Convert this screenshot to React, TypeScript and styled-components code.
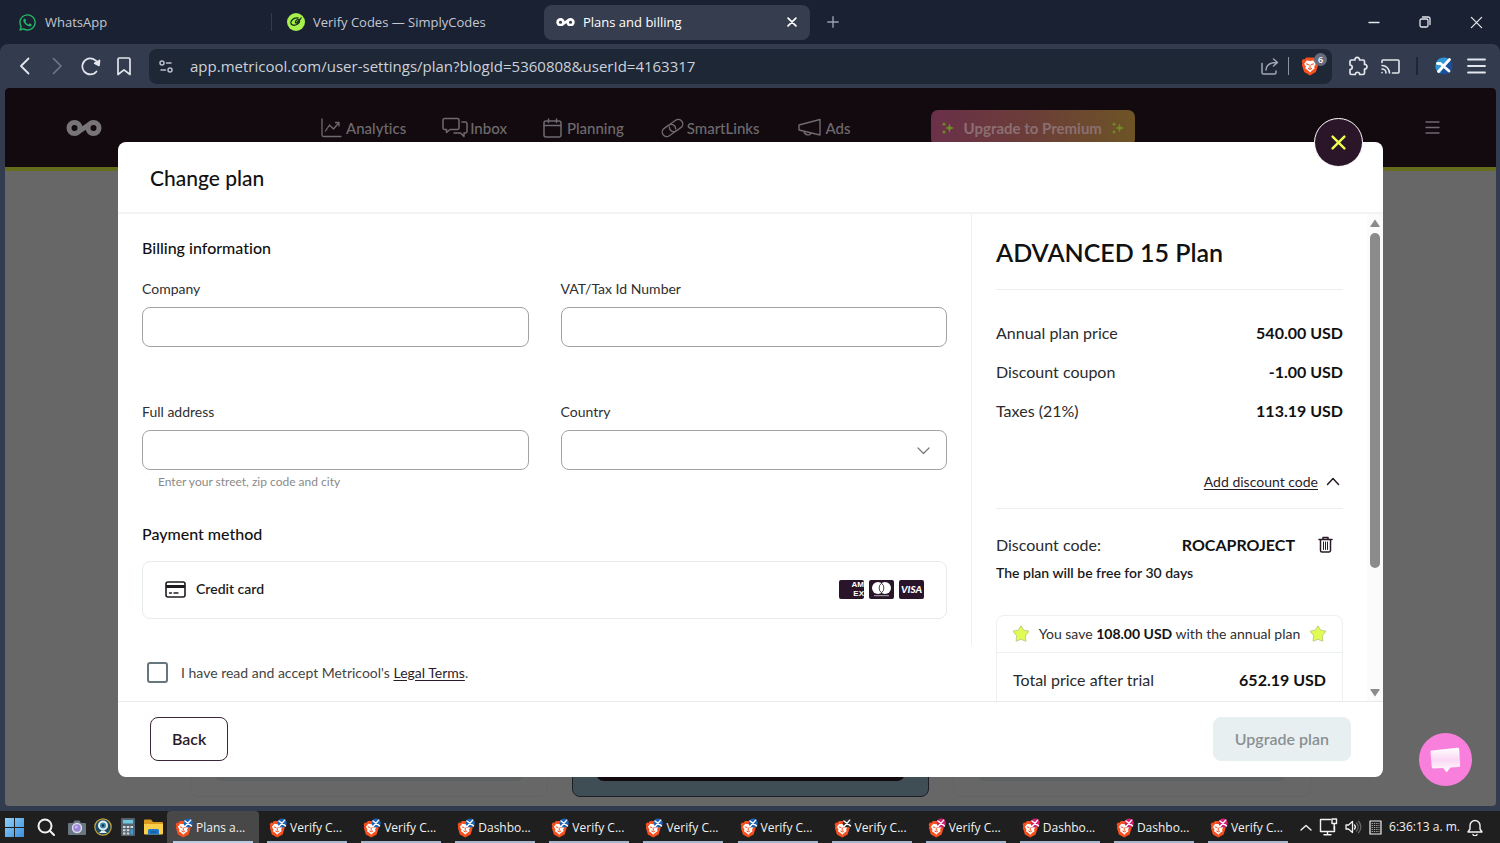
import React from 'react';
import styled, { createGlobalStyle } from 'styled-components';
import { FaWhatsapp } from 'react-icons/fa';

const uiFont = `"Open Sans", "Noto Sans", sans-serif`;
const appFont = `Lato, "Open Sans", sans-serif`;

const GlobalStyle = createGlobalStyle`
  *, *::before, *::after { box-sizing: border-box; }
  body { margin: 0; font-family: ${appFont}; font-variant-ligatures: none; color: #1b1020; }
  button, input, select { font: inherit; color: inherit; }
  button { border: 0; padding: 0; background: none; cursor: pointer; }
  svg { display: block; flex: none; }
  h1, h2, p { margin: 0; }
`;

/* ---------- Shell ---------- */

const Desktop = styled.div`
  display: flex;
  flex-direction: column;
  height: 100vh;
  overflow: hidden;
  background: #192132;
`;

const IconButton = styled.button<{ $w?: number; $color?: string }>`
  display: flex;
  align-items: center;
  justify-content: center;
  flex: none;
  width: ${(p) => p.$w ?? 33}px;
  height: 34px;
  color: ${(p) => p.$color ?? '#e3e6ec'};
`;

const Spacer = styled.div`
  flex: 1;
`;

/* ---------- Browser tabs ---------- */

const TabBar = styled.header`
  display: flex;
  align-items: center;
  gap: 3px;
  height: 44px;
  padding-left: 6px;
  font: 13px/18px ${uiFont};
  color: #c3c8d2;
`;

const Tab = styled.div<{ $active?: boolean; $divided?: boolean }>`
  display: flex;
  align-items: center;
  gap: 8px;
  flex: 0 1 266px;
  height: 35px;
  padding: 0 9px 0 12px;
  border-radius: 8px;
  white-space: nowrap;
  color: ${(p) => (p.$active ? '#ffffff' : 'inherit')};
  background: ${(p) => (p.$active ? '#353d4f' : 'transparent')};
  ${(p) =>
    p.$divided &&
    `&::after { content: ''; width: 1px; height: 18px; margin: 0 -9px 0 auto; background: #333c4f; }`}
`;

const TabClose = styled.button`
  display: flex;
  align-items: center;
  justify-content: center;
  width: 18px;
  height: 18px;
  margin-left: auto;
`;

/* ---------- Browser toolbar ---------- */

const ToolBar = styled.div`
  display: flex;
  align-items: center;
  height: 44px;
  padding: 0 7px 0 8px;
  border-radius: 8px 8px 0 0;
  background: #333b4e;
`;

const AddressBar = styled.form`
  display: flex;
  align-items: center;
  flex: 1;
  height: 35px;
  margin: 0 9px 0 9px;
  padding: 0 5px 0 10px;
  border-radius: 8px;
  background: #1e2735;
  color: #b9bfca;
`;

const AddressInput = styled.input`
  flex: 1;
  min-width: 0;
  margin-left: 17px;
  padding: 0;
  border: 0;
  outline: 0;
  background: none;
  font: 15px/22px ${uiFont};
  color: #ccd1da;
`;

const Separator = styled.span<{ $dark?: boolean }>`
  width: ${(p) => (p.$dark ? 2 : 1)}px;
  height: 18px;
  margin: 0 ${(p) => (p.$dark ? 9 : 8)}px;
  background: ${(p) => (p.$dark ? '#1f2736' : '#8c93a0')};
`;

const ShieldButton = styled.button`
  position: relative;
  display: flex;
  align-items: center;
  width: 26px;
  height: 26px;
  margin-left: 4px;
`;

const ShieldCount = styled.span`
  position: absolute;
  top: 0;
  right: 0;
  width: 13px;
  height: 13px;
  border-radius: 50%;
  background: #666b7b;
  font: 600 9px/13px ${uiFont};
  text-align: center;
  color: #fff;
`;

/* ---------- Page under the dialog ---------- */

const Frame = styled.div`
  display: flex;
  flex: 1;
  min-height: 0;
  padding: 0 4px 5px 5px;
  background: #333b4e;
`;

const Page = styled.div`
  position: relative;
  display: flex;
  flex-direction: column;
  flex: 1;
  min-width: 0;
  overflow: hidden;
  border-radius: 4px;
  background: #676767;
`;

const AppNav = styled.nav`
  display: flex;
  align-items: center;
  height: 83px;
  padding: 0 56px 0 61px;
  border-bottom: 4px solid #656d1d;
  background: #130a10;
  color: #6e6a6d;
`;

const NavLinks = styled.div`
  display: flex;
  align-items: center;
  gap: 36px;
  flex: 1;
  margin-left: 219px;
`;

const NavLink = styled.a<{ $gap: number }>`
  display: flex;
  align-items: center;
  gap: ${(p) => p.$gap}px;
  font-size: 15px;
  line-height: 20px;
  font-weight: 500;
  color: inherit;
  text-decoration: none;
`;

const PremiumButton = styled.button`
  display: flex;
  align-items: center;
  gap: 9px;
  height: 36px;
  margin-left: 44px;
  padding: 0 10px;
  border-radius: 7px;
  background: linear-gradient(90deg, #6a3049, #6b3e38 50%, #6d5425);
  font-size: 15px;
  line-height: 20px;
  font-weight: 700;
  color: #8b6f72;
  white-space: nowrap;
`;

const PlanCards = styled.div`
  display: grid;
  grid-template-columns: repeat(3, 1fr);
  gap: 24px;
  flex: 1;
  padding: 60px 185px 9px 185px;
`;

const PlanCard = styled.div<{ $featured?: boolean }>`
  display: flex;
  flex-direction: column;
  justify-content: flex-end;
  padding: 0 23px 15px;
  border: 1px solid ${(p) => (p.$featured ? '#1b1f26' : '#636363')};
  border-radius: 8px;
  background: ${(p) => (p.$featured ? '#3f4d54' : 'transparent')};

  &::after {
    content: '';
    height: 44px;
    border-radius: 8px;
    background: ${(p) => (p.$featured ? '#130a10' : '#5f6263')};
  }
`;

const ChatButton = styled.button`
  position: absolute;
  right: 24px;
  bottom: 20px;
  display: flex;
  align-items: center;
  justify-content: center;
  width: 53px;
  height: 53px;
  border-radius: 50%;
  background: #f97fdc;
`;

/* ---------- Dialog ---------- */

const Overlay = styled.div`
  position: absolute;
  inset: 0;
  display: flex;
  padding: 54px 113px 29px;
`;

const Dialog = styled.section`
  position: relative;
  display: flex;
  flex-direction: column;
  flex: 1;
  min-width: 0;
  border-radius: 8px;
  background: #fff;
`;

const CloseButton = styled.button`
  position: absolute;
  top: -24px;
  right: 20px;
  display: flex;
  align-items: center;
  justify-content: center;
  width: 49px;
  height: 49px;
  border: 1px solid #fff;
  border-radius: 50%;
  background: #2b1629;
  color: #ecff4f;
`;

const DialogHeader = styled.header`
  padding: 22px 32px 20px;
  border-bottom: 2px solid #f2f3f3;
`;

const DialogTitle = styled.h1`
  font-size: 21px;
  line-height: 28px;
  font-weight: 500;
  color: #111;
`;

const DialogBody = styled.div`
  display: flex;
  flex: 1;
  min-height: 0;
  overflow: hidden;
`;

const DialogFooter = styled.footer`
  display: flex;
  align-items: center;
  justify-content: space-between;
  height: 76px;
  padding: 0 32px 1px;
  border-top: 1px solid #e8eaea;
`;

const ActionButton = styled.button<{ $outlined?: boolean }>`
  height: 44px;
  padding: 0 21px;
  border: 1px solid ${(p) => (p.$outlined ? '#3a2637' : '#e7eff1')};
  border-radius: 8px;
  background: ${(p) => (p.$outlined ? '#fff' : '#e7eff1')};
  font-size: 16px;
  line-height: 24px;
  font-weight: 600;
  color: ${(p) => (p.$outlined ? '#2b1b29' : '#8b9093')};
`;

/* ---------- Billing form ---------- */

const FormColumn = styled.form`
  flex: 1;
  min-width: 0;
`;

const FormSection = styled.div`
  padding: 23px 24px 26px;
  border-right: 1px solid #edf0f1;
`;

const SectionTitle = styled.h2`
  font-size: 16px;
  line-height: 22px;
  font-weight: 500;
  color: #111;
`;

const FieldGrid = styled.div`
  display: grid;
  grid-template-columns: 1fr 1fr;
  gap: 32px;
  margin: 20px 0 30px;
`;

const Field = styled.div`
  position: relative;
  display: flex;
  flex-direction: column;
  min-height: 91px;
`;

const FieldLabel = styled.label`
  margin-bottom: 8px;
  font-size: 14px;
  line-height: 20px;
  color: #2f2f31;
`;

const controlStyle = `
  width: 100%;
  height: 40px;
  padding: 0 12px;
  border: 1px solid #a3a3a3;
  border-radius: 8px;
  outline: 0;
  background: #fff;
  font-size: 14px;
`;

const TextInput = styled.input`
  ${controlStyle}
`;

const SelectBox = styled.div`
  position: relative;
`;

const Select = styled.select`
  ${controlStyle}
  appearance: none;
`;

const SelectArrow = styled.span`
  position: absolute;
  top: 17px;
  right: 17px;
  color: #777;
  pointer-events: none;
`;

const Hint = styled.p`
  padding: 2px 16px 0;
  font-size: 12px;
  line-height: 20px;
  color: #8a8a8a;
`;

const PaymentOption = styled.button`
  display: flex;
  align-items: center;
  gap: 10px;
  width: 100%;
  height: 58px;
  margin-top: 16px;
  padding: 0 22px 2px;
  border: 1px solid #e6ecee;
  border-radius: 8px;
  font-size: 14px;
  line-height: 20px;
  font-weight: 600;
  color: #1f1a20;
`;

const CardBrands = styled.span`
  display: flex;
  gap: 5px;
  margin-left: auto;
`;

const CardBrand = styled.span`
  display: flex;
  flex-direction: column;
  align-items: center;
  justify-content: center;
  width: 25px;
  height: 19px;
  border-radius: 2px;
  background: #29142a;
  color: #fff;
`;

const VisaText = styled.span`
  font: italic 900 10px/10px ${appFont};
`;

const AmexLine = styled.span`
  align-self: flex-end;
  height: 9px;
  font: 900 8px/9px "Liberation Sans", sans-serif;
`;

const Terms = styled.div`
  display: flex;
  align-items: center;
  gap: 13px;
  padding: 17px 29px;
  font-size: 14px;
  line-height: 20px;
  color: #444;
`;

const Checkbox = styled.input`
  appearance: none;
  flex: none;
  width: 21px;
  height: 21px;
  margin: 0;
  border: 2px solid #66767d;
  border-radius: 3px;
`;

const TermsLink = styled.a`
  color: #2b1b29;
  text-underline-offset: 2px;
`;

/* ---------- Plan summary ---------- */

const Summary = styled.aside`
  flex: 0 0 395px;
  padding: 22px 24px 0;
`;

const PlanTitle = styled.h2`
  padding-bottom: 21px;
  border-bottom: 1px solid #ebeeef;
  font-size: 25px;
  line-height: 32px;
  font-weight: 600;
  color: #111;
`;

const PriceList = styled.div`
  padding: 23px 0 40px;
`;

const SummaryRow = styled.div<{ $h: number; $inset?: boolean }>`
  display: flex;
  align-items: center;
  justify-content: space-between;
  height: ${(p) => p.$h}px;
  padding: ${(p) => (p.$inset ? '0 16px' : '0')};
  font-size: 16px;
  line-height: 24px;
  color: #2a2a2c;
`;

const Amount = styled.strong`
  font-weight: 700;
  color: #111;
`;

const DiscountToggle = styled.button`
  display: flex;
  align-items: center;
  gap: 8px;
  width: 100%;
  height: 39px;
  justify-content: flex-end;
  padding: 0 3px 15px;
  border-bottom: 1px solid #ebeeef;
  font-size: 14px;
  line-height: 20px;
  color: #2b1b29;
`;

const Underlined = styled.span`
  text-decoration: underline;
  text-underline-offset: 2px;
`;

const CodeBlock = styled.div`
  padding: 20px 0 32px;
`;

const CodeValue = styled.span`
  display: flex;
  align-items: center;
  gap: 12px;
`;

const FreeNote = styled.p`
  margin-top: 3px;
  font-size: 14px;
  line-height: 20px;
  font-weight: 600;
  color: #1a1a1c;
`;

const TotalBox = styled.div`
  border: 1px solid #edf0f1;
  border-radius: 8px 8px 0 0;
`;

const SavingLine = styled.div`
  display: flex;
  align-items: center;
  justify-content: space-between;
  height: 37px;
  padding: 0 15px;
  border-bottom: 1px solid #edf0f1;
  font-size: 14px;
  line-height: 20px;
  color: #2f2f31;
`;

/* ---------- Scroll bar ---------- */

const ScrollTrack = styled.div`
  display: flex;
  flex-direction: column;
  align-items: center;
  flex: 0 0 16px;
  padding: 5px 0 4px;
  background: #fbfbfb;
  color: #8b8b8b;
`;

const ScrollThumb = styled.div`
  flex: 0 1 70%;
  width: 10px;
  margin: 6px 0 auto;
  border-radius: 5px;
  background: #8b8b8b;
`;

/* ---------- Task bar ---------- */

const TaskBar = styled.footer`
  display: flex;
  align-items: center;
  height: 32px;
  background: #1f1f1f;
  font: 12px/16px ${uiFont};
  color: #f2f2f2;
`;

const Pinned = styled.div`
  display: flex;
  align-items: center;
  justify-content: space-between;
  width: 158px;
  margin: 0 8px 0 5px;
  flex: none;
`;

const PlainButton = styled.button<{ $w?: number }>`
  display: flex;
  align-items: center;
  justify-content: center;
  min-width: ${(p) => p.$w ?? 0}px;
`;

const TaskList = styled.div`
  display: grid;
  grid-template-columns: repeat(12, 1fr);
  flex: 1;
  min-width: 0;
  height: 32px;
  margin-left: -4px;
`;

const TaskButton = styled.button<{ $active?: boolean }>`
  display: flex;
  align-items: center;
  gap: 2px;
  width: 92px;
  height: 32px;
  padding: 1px 0 0 8px;
  border-radius: 4px 4px 0 0;
  background: ${(p) =>
    p.$active
      ? 'linear-gradient(#b9cbe2, #b9cbe2) center bottom / 80px 2px no-repeat, #484848'
      : 'linear-gradient(#a5b6cc, #a5b6cc) center bottom / 80px 2px no-repeat'};
  white-space: nowrap;
`;

const Tray = styled.div`
  display: flex;
  align-items: center;
  gap: 7px;
  flex: none;
  margin-left: 4px;
  padding-right: 17px;
`;

const Clock = styled.time`
  white-space: nowrap;
`;

/* ---------- Drawings ---------- */

const Line = ({ w, h = w, box, sw = 2, children }: { w: number; h?: number; box: string; sw?: number; children: React.ReactNode }) => (
  <svg width={w} height={h} viewBox={box} fill="none" stroke="currentColor" strokeWidth={sw} strokeLinecap="round" strokeLinejoin="round" aria-hidden>
    {children}
  </svg>
);

const Infinity = ({ w, color }: { w: number; color: string }) => (
  <svg width={w} height={(w * 16) / 36} viewBox="0 0 36 16" fill="none" stroke={color} strokeWidth="5" aria-hidden>
    <circle cx="8.500" cy="8" r="5.500" />
    <circle cx="27.500" cy="8" r="5.500" />
    <path d="M12.500 11.500 C16 10 20 6 23.500 4.500" />
  </svg>
);

const SimplyCodesIcon = () => (
  <svg width="18" height="18" viewBox="0 0 18 18" fill="none" aria-hidden>
    <circle cx="9" cy="9" r="9" fill="#a8f04c" />
    <path d="M11 5C7.500 4.500 3.800 7 3.800 9.800c0 2.600 3.800 3 6 1.700 2-1.100 3-2.800 2.700-4.100-.5-1.200-2.700-.8-3.700.6-.8 1.300-.3 2.100.6 1.900 1.300-.3 2.600-2.600 4.800-5" stroke="#15301a" strokeWidth="1.300" strokeLinecap="round" strokeLinejoin="round" />
  </svg>
);

const LionShape = () => (
  <>
    <path d="M6 1.500h8l1.800 2 1.900-.2 1.500 2.600-.8 1.900.6 2-2.500 8L10 21.500 3.500 17.800 1 9.800l.6-2-.8-1.900 1.500-2.600 1.900.2z" fill="#f5501e" />
    <path d="M6.500 4.800l3.500.6 3.500-.6 3 3.600-1.900 3.300.6 2.200-3.100 2.200L10 18.200 7.900 16.100 4.800 13.900l.6-2.200-1.900-3.300z" fill="#fff" />
    <path d="M5.800 8.600l3 .9M14.200 8.600l-3 .9M10 9.500v3.800M7.800 13.500l2.200 1.200 2.200-1.200" stroke="#f5501e" strokeWidth="1.200" fill="none" />
  </>
);

const Lion = () => (
  <svg width="18" height="20" viewBox="0 0 20 22" aria-hidden>
    <LionShape />
  </svg>
);

const TaskLion = ({ badge }: { badge: string }) => (
  <svg width="19" height="20" viewBox="0 0 23 24" aria-hidden>
    <g transform="translate(0 2)">
      <LionShape />
    </g>
    <circle cx="16" cy="6" r="5.500" fill={badge} />
    <path d="M12 3.500l8 6M19 2.500l-7 8" stroke="#fff" strokeWidth="1.700" strokeLinecap="round" />
  </svg>
);

const Sparkles = () => (
  <svg width="14" height="14" viewBox="0 0 14 14" fill="#6f8a26" aria-hidden>
    <path d="M8.500 2.500l1.200 3.200L13.500 7 9.700 8.300 8.500 11.500 7.300 8.300 4 7l3.300-1.300zM3 .8l.7 1.700 1.700.7-1.700.7L3 5.600l-.7-1.700-1.700-.7 1.700-.7zM3 8.600l.7 1.700 1.700.7-1.700.7L3 13.400l-.7-1.700-1.700-.7 1.700-.7z" />
  </svg>
);

const Star = () => (
  <svg width="18" height="18" viewBox="0 0 18 18" aria-hidden>
    <path d="M9 1.800l2.200 4.100 4.700.9-3.300 3.600.6 4.800L9 13.300l-4.200 1.900.6-4.800-3.300-3.600 4.700-.9z" fill="#e2fb53" stroke="#e2fb53" strokeWidth="2" strokeLinejoin="round" />
    <path d="M9 .9l2.600 4.200 5.200 1-3.400 4.500.5 5.700L9 14.300l-4.900 2 .5-5.700-3.400-4.500 5.200-1z" fill="none" stroke="#b9c592" strokeWidth="0.800" strokeLinejoin="round" />
  </svg>
);

const MastercardIcon = () => (
  <svg width="21" height="16" viewBox="0 0 21 16" aria-hidden>
    <circle cx="7" cy="7" r="6" fill="#fff" />
    <circle cx="14" cy="7" r="6" fill="#fff" />
    <path d="M10.500 2.200a6 6 0 0 1 0 9.600 6 6 0 0 1 0-9.600z" fill="#fff" stroke="#29142a" strokeWidth="0.800" />
    <path d="M3 14.700h15" stroke="#b5aab5" strokeWidth="1" />
  </svg>
);

const WindowsIcon = () => (
  <svg width="19" height="19" viewBox="0 0 19 19" aria-hidden>
    <defs>
      <linearGradient id="win" x1="0" y1="0" x2="1" y2="1">
        <stop offset="0" stopColor="#8fd0f5" />
        <stop offset="1" stopColor="#3d8fdf" />
      </linearGradient>
    </defs>
    <path d="M0 0h9v9H0zM10 0h9v9h-9zM0 10h9v9H0zM10 10h9v9h-9z" fill="url(#win)" />
  </svg>
);

const CameraIcon = () => (
  <svg width="18" height="15" viewBox="0 0 18 15" aria-hidden>
    <path d="M1 3h4l1.500-2.500h5L13 3h4a1 1 0 0 1 1 1v10a1 1 0 0 1-1 1H1a1 1 0 0 1-1-1V4a1 1 0 0 1 1-1z" fill="#6a7683" />
    <circle cx="9" cy="8" r="5.200" fill="#d9dde3" />
    <circle cx="9" cy="8" r="3.700" fill="#9b84d8" />
    <circle cx="8.300" cy="7" r="1.500" fill="#c7b8f0" />
  </svg>
);

const WebcamIcon = () => (
  <svg width="18" height="18" viewBox="0 0 18 18" aria-hidden>
    <circle cx="9" cy="9" r="8.200" fill="#1d4a63" stroke="#c2a23c" strokeWidth="1.200" />
    <circle cx="9" cy="7.500" r="5" fill="#e4eef2" />
    <circle cx="9" cy="7.500" r="3" fill="#3c87a8" />
    <circle cx="9" cy="7.500" r="1.200" fill="#12303f" />
    <path d="M5 15l2.500-2.500h3L13 15z" fill="#e4eef2" />
  </svg>
);

const CalculatorIcon = () => (
  <svg width="14" height="18" viewBox="0 0 14 18" aria-hidden>
    <rect width="14" height="18" rx="1" fill="#56626d" />
    <rect x="2" y="2" width="10" height="3.500" fill="#6fc7e0" />
    <path d="M2 8h2.500v2H2zM5.800 8h2.500v2H5.800zM2 11.300h2.500v2H2zM5.800 11.300h2.500v2H5.800zM2 14.500h2.500v2H2zM5.800 14.500h2.500v2H5.800zM9.500 8H12v2H9.500z" fill="#d4dbe0" />
    <path d="M9.500 11.300H12v5.200H9.500z" fill="#3d9bd8" />
  </svg>
);

const FolderIcon = () => (
  <svg width="19" height="16" viewBox="0 0 19 16" aria-hidden>
    <path d="M0 1.500A1 1 0 0 1 1 .5h6l2 2.500h9a1 1 0 0 1 1 1V15H0z" fill="#d99a1e" />
    <path d="M0 5h19v9.500a1 1 0 0 1-1 1H1a1 1 0 0 1-1-1z" fill="#fccf4a" />
    <path d="M4 15.500v-4a1.500 1.500 0 0 1 1.500-1.500h8a1.500 1.500 0 0 1 1.500 1.500v4z" fill="#1f78c8" />
    <path d="M6.500 13h6" stroke="#0e4f8e" strokeWidth="1" />
  </svg>
);

const ProfileIcon = () => (
  <svg width="18" height="18" viewBox="0 0 18 18" aria-hidden>
    <circle cx="9" cy="9" r="8.500" fill="#1b4f9c" />
    <path d="M9 .5a8.500 8.500 0 0 0-4 16L14 2A8.500 8.500 0 0 0 9 .5z" fill="#2f97d6" />
    <path d="M2.500 6.500h3L14 14M14.500 2.500L3.500 14.500" stroke="#fff" strokeWidth="2.800" strokeLinecap="round" strokeLinejoin="round" fill="none" />
  </svg>
);

const ChatIcon = () => (
  <svg width="31" height="26" viewBox="0 0 31 26" aria-hidden>
    <defs>
      <linearGradient id="chat" x1="0" y1="0" x2="0" y2="1">
        <stop offset="0" stopColor="#fff" />
        <stop offset="0.500" stopColor="#fbd7f3" />
        <stop offset="1" stopColor="#fff" />
      </linearGradient>
    </defs>
    <path d="M1.500 3.500L27.500.8a1.500 1.500 0 0 1 1.700 1.400l1 16.200a1.500 1.500 0 0 1-1.400 1.500l-8.300.6-3.800 4.700-3.700-4.300-9.800.6a1.500 1.500 0 0 1-1.500-1.400L.5 5a1.400 1.400 0 0 1 1-1.500z" fill="url(#chat)" />
  </svg>
);

/* ---------- Data ---------- */

const navItems = [
  {
    label: 'Analytics',
    gap: 4,
    icon: (
      <Line w={21} h={20} box="0 0 21 20" sw={1.3}>
        <path d="M1 1v16a1.500 1.500 0 0 0 1.500 1.500H20M4.500 13l4-6 4 4 5.500-6.500M14.500 4.500H18V8" />
      </Line>
    ),
  },
  {
    label: 'Inbox',
    gap: 2,
    icon: (
      <Line w={26} h={21} box="0 0 26 21" sw={1.5}>
        <path d="M2.500 1.500h13A1.500 1.500 0 0 1 17 3v8a1.500 1.500 0 0 1-1.500 1.500H8l-3.500 3v-3h-2A1.500 1.500 0 0 1 1 11V3a1.500 1.500 0 0 1 1.500-1.500z" />
        <path d="M20 5h3.500A1.500 1.500 0 0 1 25 6.500v8a1.500 1.500 0 0 1-1.500 1.500H22v3.500L18.500 16H12" />
      </Line>
    ),
  },
  {
    label: 'Planning',
    gap: 5,
    icon: (
      <Line w={19} h={20} box="0 0 19 20" sw={1.5}>
        <rect x="1" y="3" width="17" height="16" rx="2" />
        <path d="M1 7.500h17M5.500 1v3.500M13.500 1v3.500" />
      </Line>
    ),
  },
  {
    label: 'SmartLinks',
    gap: 2,
    icon: (
      <Line w={25} h={20} box="0 0 25 20" sw={1.4}>
        <g transform="rotate(-35 12.5 10)">
          <path d="M12 14.500H5.500a4.500 4.500 0 0 1 0-9H11a4.500 4.500 0 0 1 3.500 7.200" />
          <path d="M13 5.500h6.500a4.500 4.500 0 0 1 0 9H14a4.500 4.500 0 0 1-3.500-7.200" />
        </g>
      </Line>
    ),
  },
  {
    label: 'Ads',
    gap: 5,
    icon: (
      <Line w={25} h={19} box="-2 0 25 19" sw={1.4}>
        <path d="M1 7l21-5.500v15.500L1 12zM6 13.300c0 4 6.500 4.700 7 1.700" />
      </Line>
    ),
  },
];

const prices = [
  ['Annual plan price', '540.00 USD'],
  ['Discount coupon', '-1.00 USD'],
  ['Taxes (21%)', '113.19 USD'],
];

const blue = '#1d63b5';
const pink = '#d0206f';
const tasks: [string, string][] = [
  ['Plans a...', blue],
  ['Verify C...', blue],
  ['Verify C...', blue],
  ['Dashbo...', blue],
  ['Verify C...', blue],
  ['Verify C...', blue],
  ['Verify C...', blue],
  ['Verify C...', '#2b2b2f'],
  ['Verify C...', pink],
  ['Dashbo...', pink],
  ['Dashbo...', pink],
  ['Verify C...', pink],
];

const Cross = ({ size, sw }: { size: number; sw: number }) => (
  <Line w={size} box="0 0 14 14" sw={sw}>
    <path d="M1.500 1.500l11 11M12.500 1.500l-11 11" />
  </Line>
);

/* ---------- Sections ---------- */

const BrowserTop = () => (
  <>
    <TabBar>
      <Tab $divided>
        <FaWhatsapp size={19} color="#25b668" />
        WhatsApp
      </Tab>
      <Tab>
        <SimplyCodesIcon />
        Verify Codes — SimplyCodes
      </Tab>
      <Tab $active>
        <Infinity w={19} color="#fff" />
        Plans and billing
        <TabClose aria-label="Close tab">
          <Cross size={10} sw={2.4} />
        </TabClose>
      </Tab>
      <IconButton aria-label="New tab" $w={40} $color="#99a0ad">
        <Line w={12} box="0 0 12 12" sw={1.4}>
          <path d="M6 .8v10.400M.8 6h10.400" />
        </Line>
      </IconButton>
      <Spacer />
      <IconButton aria-label="Minimize" $w={48}>
        <Line w={12} box="0 0 12 12" sw={1.4}>
          <path d="M1 6.500h10" />
        </Line>
      </IconButton>
      <IconButton aria-label="Restore" $w={48}>
        <Line w={12} box="0 0 12 12" sw={1.3}>
          <rect x="1" y="3" width="8" height="8" rx="1.500" />
          <path d="M3.500 1H9a2 2 0 0 1 2 2v5.500" />
        </Line>
      </IconButton>
      <IconButton aria-label="Close" $w={48}>
        <Cross size={13} sw={1.4} />
      </IconButton>
    </TabBar>
    <ToolBar>
      <IconButton aria-label="Back">
        <Line w={11} h={18} box="0 0 11 18" sw={1.8}>
          <path d="M9.500 1.500L2 9l7.500 7.500" />
        </Line>
      </IconButton>
      <IconButton aria-label="Forward" $color="#717888">
        <Line w={11} h={18} box="0 0 11 18" sw={1.6}>
          <path d="M1.500 1.500L9 9l-7.500 7.500" />
        </Line>
      </IconButton>
      <IconButton aria-label="Reload">
        <Line w={20} h={19} box="0 0 20 19" sw={1.7}>
          <path d="M15.500 14.500A8 8 0 1 1 16.800 6.500" />
          <path d="M18.500 3.500l-.5 5-4.300-2.200z" fill="currentColor" />
        </Line>
      </IconButton>
      <IconButton aria-label="Bookmark">
        <Line w={14} h={19} box="0 0 14 19" sw={1.7}>
          <path d="M1 17.500V2.500A1.500 1.500 0 0 1 2.500 1h9A1.500 1.500 0 0 1 13 2.500v15l-6-4.700z" />
        </Line>
      </IconButton>
      <AddressBar>
        <Line w={14} h={13} box="0 0 14 13" sw={1.5}>
          <circle cx="3" cy="3" r="2" />
          <path d="M7.500 3H12" />
          <circle cx="11" cy="10" r="2" />
          <path d="M2 10h4.500" />
        </Line>
        <AddressInput aria-label="Address" defaultValue="app.metricool.com/user-settings/plan?blogId=5360808&userId=4163317" />
        <IconButton type="button" aria-label="Share" $w={20} $color="#a1a7b2">
          <Line w={18} h={17} box="0 0 18 17" sw={1.5}>
            <path d="M1 5.500v9A1.500 1.500 0 0 0 2.500 16h11a1.500 1.500 0 0 0 1.500-1.500V13M5 12c.3-5 3.500-7.500 11-7.500M12.500 1L16.500 4.500 12.500 8" />
          </Line>
        </IconButton>
        <Separator />
        <ShieldButton type="button" aria-label="Shields">
          <Lion />
          <ShieldCount>6</ShieldCount>
        </ShieldButton>
      </AddressBar>
      <IconButton aria-label="Extensions">
        <Line w={20} box="0 0 20 20" sw={1.7}>
          <path d="M2 5.500A1.500 1.500 0 0 1 3.500 4H7c-.7-3.500 5-3.500 4.500 0h3.500A1.500 1.500 0 0 1 16.500 5.500V8.500c3.300-.6 3.300 5 0 4.500v4a1.500 1.500 0 0 1-1.500 1.500h-3.300c.2-3-4.600-3-4.400 0H3.500A1.500 1.500 0 0 1 2 17v-3.500c3-.2 3-4.300 0-4.500z" />
        </Line>
      </IconButton>
      <IconButton aria-label="Cast">
        <Line w={19} h={15} box="0 0 19 15" sw={1.6}>
          <path d="M1 3.500V2a1 1 0 0 1 1-1h15a1 1 0 0 1 1 1v11a1 1 0 0 1-1 1h-5.500M1 6.500A7.500 7.500 0 0 1 8.500 14M1 10a4 4 0 0 1 4 4M1 13.500v.3" />
        </Line>
      </IconButton>
      <Separator $dark />
      <IconButton aria-label="Profile">
        <ProfileIcon />
      </IconButton>
      <IconButton aria-label="Menu">
        <Line w={19} h={16} box="0 0 19 16" sw={1.8}>
          <path d="M1 1.500h17M1 8h17M1 14.500h17" />
        </Line>
      </IconButton>
    </ToolBar>
  </>
);

const BillingForm = () => (
  <FormColumn id="billing">
    <FormSection>
      <SectionTitle>Billing information</SectionTitle>
      <FieldGrid>
        <Field>
          <FieldLabel htmlFor="company">Company</FieldLabel>
          <TextInput id="company" />
        </Field>
        <Field>
          <FieldLabel htmlFor="vat">VAT/Tax Id Number</FieldLabel>
          <TextInput id="vat" />
        </Field>
        <Field>
          <FieldLabel htmlFor="address">Full address</FieldLabel>
          <TextInput id="address" aria-describedby="address-hint" />
          <Hint id="address-hint">Enter your street, zip code and city</Hint>
        </Field>
        <Field>
          <FieldLabel htmlFor="country">Country</FieldLabel>
          <SelectBox>
            <Select id="country" defaultValue="">
              <option value="" />
            </Select>
            <SelectArrow>
              <Line w={13} h={8} box="0 0 13 8" sw={1.2}>
                <path d="M1 1l5.500 5.500L12 1" />
              </Line>
            </SelectArrow>
          </SelectBox>
        </Field>
      </FieldGrid>
      <SectionTitle>Payment method</SectionTitle>
      <PaymentOption type="button">
        <Line w={21} h={17} box="0 0 21 17" sw={1.6}>
          <rect x="1" y="1" width="19" height="15" rx="2" />
          <path d="M1 5.500h19" strokeWidth="3" strokeLinecap="butt" />
          <path d="M4.500 12h2M9 12h4" strokeWidth="1.300" />
        </Line>
        Credit card
        <CardBrands>
          <CardBrand>
            <AmexLine>AM</AmexLine>
            <AmexLine>EX</AmexLine>
          </CardBrand>
          <CardBrand>
            <MastercardIcon />
          </CardBrand>
          <CardBrand>
            <VisaText>VISA</VisaText>
          </CardBrand>
        </CardBrands>
      </PaymentOption>
    </FormSection>
    <Terms>
      <Checkbox type="checkbox" id="terms" />
      <label htmlFor="terms">
        I have read and accept Metricool's <TermsLink href="#terms">Legal Terms</TermsLink>.
      </label>
    </Terms>
  </FormColumn>
);

const PlanSummary = () => (
  <Summary>
    <PlanTitle>ADVANCED 15 Plan</PlanTitle>
    <PriceList>
      {prices.map(([label, amount]) => (
        <SummaryRow key={label} $h={39}>
          {label}
          <Amount>{amount}</Amount>
        </SummaryRow>
      ))}
    </PriceList>
    <DiscountToggle>
      <Underlined>Add discount code</Underlined>
      <Line w={14} h={9} box="0 0 14 9" sw={1.5}>
        <path d="M1.500 7.500L7 1.500l5.500 6" />
      </Line>
    </DiscountToggle>
    <CodeBlock>
      <SummaryRow $h={31}>
        Discount code:
        <CodeValue>
          <Amount>ROCAPROJECT</Amount>
          <IconButton aria-label="Remove code" $w={36} $color="#2b1b29">
            <Line w={15} h={17} box="0 0 15 17" sw={1.5}>
              <path d="M1 3.500h13M5 3.500V1.500h5v2M2.500 3.500v11A1.500 1.500 0 0 0 4 16h7a1.500 1.500 0 0 0 1.500-1.500v-11" />
              <path d="M5.500 6v7.500M7.500 6v7.500M9.500 6v7.500" strokeWidth="1" />
            </Line>
          </IconButton>
        </CodeValue>
      </SummaryRow>
      <FreeNote>The plan will be free for 30 days</FreeNote>
    </CodeBlock>
    <TotalBox>
      <SavingLine>
        <Star />
        <span>
          You save <Amount>108.00 USD</Amount> with the annual plan
        </span>
        <Star />
      </SavingLine>
      <SummaryRow $h={54} $inset>
        Total price after trial
        <Amount>652.19 USD</Amount>
      </SummaryRow>
    </TotalBox>
  </Summary>
);

export default function App() {
  return (
    <Desktop>
      <GlobalStyle />
      <BrowserTop />
      <Frame>
        <Page>
          <AppNav>
            <Infinity w={36} color="#787577" />
            <NavLinks>
              {navItems.map((item) => (
                <NavLink key={item.label} href="#" $gap={item.gap}>
                  {item.icon}
                  {item.label}
                </NavLink>
              ))}
              <PremiumButton>
                <Sparkles />
                Upgrade to Premium
                <Sparkles />
              </PremiumButton>
            </NavLinks>
            <Line w={15} h={13} box="0 0 15 13" sw={1.4}>
              <path d="M1 1h13M1 6.500h13M1 12h13" />
            </Line>
          </AppNav>
          <PlanCards>
            <PlanCard />
            <PlanCard $featured />
            <PlanCard />
          </PlanCards>
          <Overlay>
            <Dialog role="dialog" aria-labelledby="dialog-title">
              <DialogHeader>
                <DialogTitle id="dialog-title">Change plan</DialogTitle>
              </DialogHeader>
              <DialogBody>
                <BillingForm />
                <PlanSummary />
                <ScrollTrack aria-hidden>
                  <svg width="10" height="8" viewBox="0 0 10 8" fill="currentColor">
                    <path d="M5 0.500L9.500 7a.6.6 0 0 1-.5 1H1a.6.6 0 0 1-.5-1z" />
                  </svg>
                  <ScrollThumb />
                  <svg width="10" height="8" viewBox="0 0 10 8" fill="currentColor">
                    <path d="M5 7.500L.5 1A.6.6 0 0 1 1 0h8a.6.6 0 0 1 .5 1z" />
                  </svg>
                </ScrollTrack>
              </DialogBody>
              <DialogFooter>
                <ActionButton $outlined>Back</ActionButton>
                <ActionButton disabled>Upgrade plan</ActionButton>
              </DialogFooter>
              <CloseButton aria-label="Close dialog">
                <Cross size={15} sw={2.2} />
              </CloseButton>
            </Dialog>
          </Overlay>
          <ChatButton aria-label="Open chat">
            <ChatIcon />
          </ChatButton>
        </Page>
      </Frame>
      <TaskBar>
        <Pinned>
          <PlainButton aria-label="Start"><WindowsIcon /></PlainButton>
          <PlainButton aria-label="Search" $w={26}>
            <Line w={18} box="0 0 18 18" sw={2}>
              <circle cx="8" cy="8" r="6.500" />
              <path d="M12.800 12.800L17 17" />
            </Line>
          </PlainButton>
          <PlainButton aria-label="Camera"><CameraIcon /></PlainButton>
          <PlainButton aria-label="Webcam"><WebcamIcon /></PlainButton>
          <PlainButton aria-label="Calculator"><CalculatorIcon /></PlainButton>
          <PlainButton aria-label="Files"><FolderIcon /></PlainButton>
        </Pinned>
        <TaskList>
          {tasks.map(([label, badge], i) => (
            <TaskButton key={i} $active={i === 0}>
              <TaskLion badge={badge} />
              {label}
            </TaskButton>
          ))}
        </TaskList>
        <Tray>
          <PlainButton aria-label="Show hidden icons">
            <Line w={12} h={7} box="0 0 12 7" sw={1.4}>
              <path d="M1 6l5-4.500L11 6" />
            </Line>
          </PlainButton>
          <Line w={19} h={18} box="0 0 19 18" sw={1.4}>
            <path d="M11.500 1.500h-10v12h14v-5M5 16.800h7M8.500 13.500v3" />
            <rect x="13" y="1" width="4.500" height="4.500" />
            <path d="M15.200 5.500v6" />
          </Line>
          <Line w={17} h={14} box="0 0 17 14" sw={1.3}>
            <path d="M1 5h2.500L7.500 1.500v11L3.500 9H1zM9.500 5a3 3 0 0 1 0 4" />
            <path d="M11.500 3a6 6 0 0 1 0 8M13.500 1.200a8.500 8.500 0 0 1 0 11.600" stroke="#666" />
          </Line>
          <Line w={13} h={15} box="0 0 13 15" sw={1.2}>
            <rect x="1" y="1" width="11" height="13" />
            <path d="M3 3.500h7M3 5.500h7M3 7.500h7M3 9.500h7M3 11.500h7" stroke="#aaa" strokeWidth="1" strokeDasharray="0.500 1.800" />
          </Line>
          <Clock>6:36:13 a. m.</Clock>
          <PlainButton aria-label="Notifications">
            <Line w={16} h={17} box="0 0 16 17" sw={1.4}>
              <path d="M1 13h14l-2-3V6.500a5 5 0 0 0-10 0V10zM6 15.500a2.200 2.200 0 0 0 4 0" />
            </Line>
          </PlainButton>
        </Tray>
      </TaskBar>
    </Desktop>
  );
}
